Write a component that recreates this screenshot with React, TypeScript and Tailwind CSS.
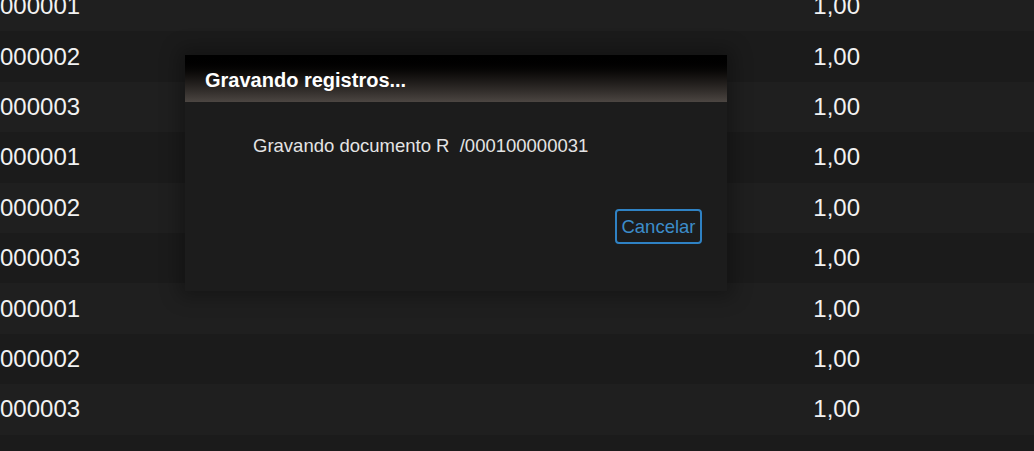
import React from "react";

const rows = ["000001", "000002", "000003", "000001", "000002", "000003", "000001", "000002", "000003", ""];

export default function App() {
  return (
    <div className="relative h-[451px] w-[1034px] overflow-hidden bg-[#1c1c1c] font-['Liberation_Sans',Arial,sans-serif]">
      <div className="mt-[-19px] flex flex-col">
        {rows.map((code, i) => (
          <div
            key={i}
            className={
              "flex h-[50.4px] shrink-0 items-center justify-between pr-[174px] text-[24px] text-[#f2f2f2] " +
              (i % 2 === 0 ? "bg-[#1f1f1f]" : "bg-[#1b1b1b]")
            }
          >
            <span>{code}</span>
            <span>{code ? "1,00" : ""}</span>
          </div>
        ))}
      </div>

      <div className="absolute left-[185px] top-[55px] flex h-[236px] w-[542px] flex-col bg-[#1c1c1c] shadow-[0_0_18px_6px_rgba(0,0,0,0.3)]">
        <div className="flex h-[47px] items-center bg-linear-to-b from-[#000000] to-[#4c4642] px-[20px] pt-[3px]">
          <span className="text-[20px] font-bold text-white">Gravando registros...</span>
        </div>
        <div className="flex flex-1 flex-col">
          <p className="pl-[68px] pt-[33px] text-[18.5px] leading-[22px] text-[#e4e4e4]">
            Gravando documento R&nbsp;&nbsp;/000100000031
          </p>
          <div className="mt-[52px] flex justify-end pr-[25px]">
            <button className="flex h-[35px] w-[87px] items-center justify-center rounded-[4px] border-2 border-[#2f82c4] text-[18.5px] text-[#3c8dca]">
              Cancelar
            </button>
          </div>
        </div>
      </div>
    </div>
  );
}
